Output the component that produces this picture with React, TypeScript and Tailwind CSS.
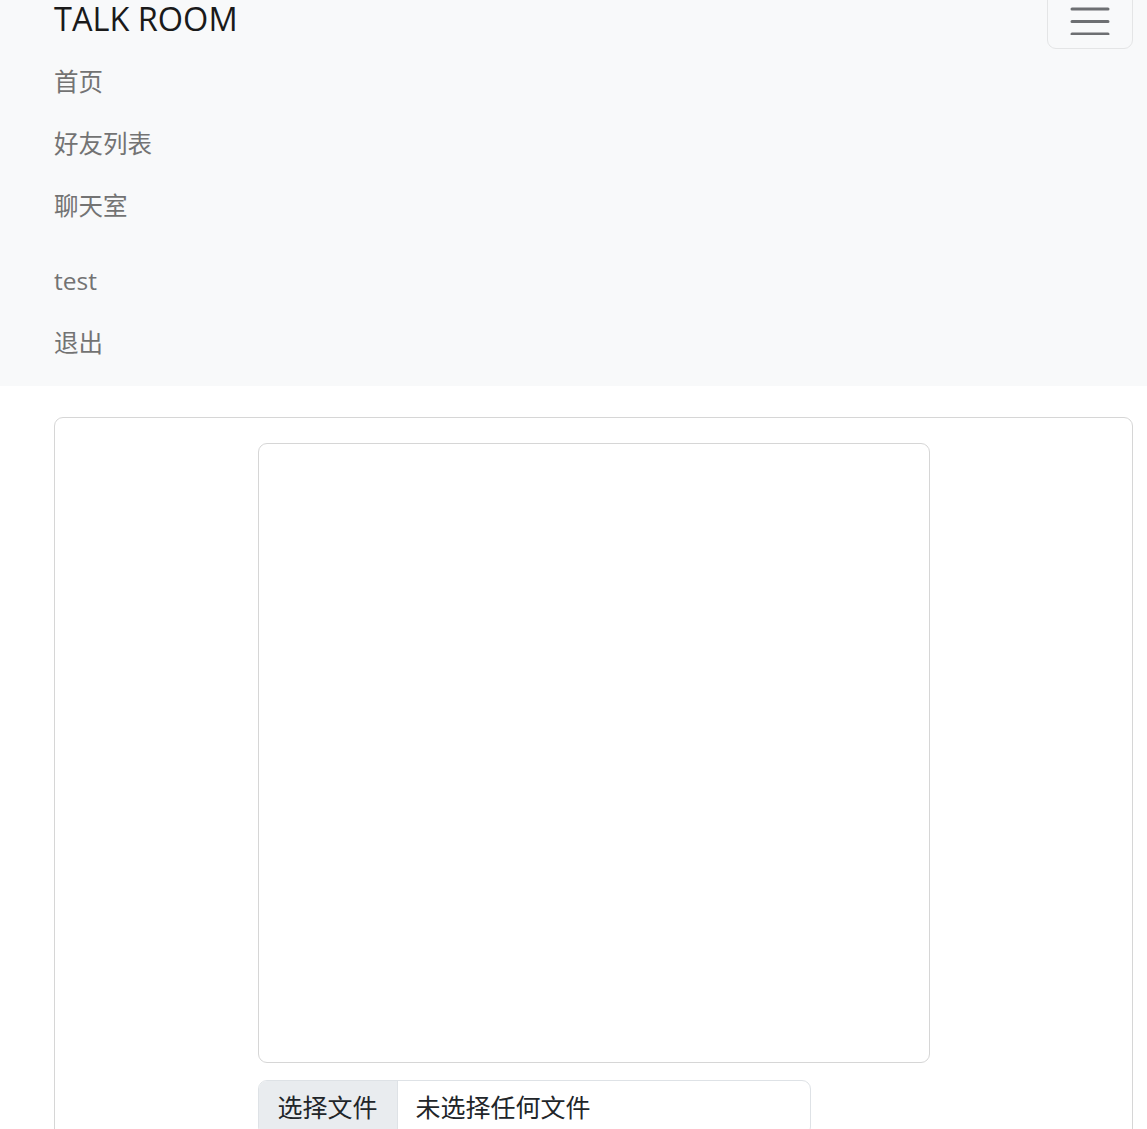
import React from "react";

const navLinks = [
  { label: "首页", id: "home" },
  { label: "好友列表", id: "friends" },
  { label: "聊天室", id: "chat" },
];

const userLinks = [
  { label: "test", id: "user" },
  { label: "退出", id: "logout" },
];

const fontStack = "font-['Segoe_UI','Open_Sans','Noto_Sans_CJK_SC',sans-serif]";

export default function App() {
  return (
    <div className={`h-[1129px] w-full overflow-hidden bg-white ${fontStack}`}>
      <header className="bg-[#f8f9fa] pb-[12px] pl-[54px] pr-[14px]">
        <div className="-mt-[10px] flex items-start justify-between">
          <a className="mt-[6px] block text-[32.5px] leading-[45px] text-[#1a1a1a]">TALK ROOM</a>
          <button
            className="flex h-[59px] w-[86px] items-center justify-center rounded-[9px] border border-[#e4e5e6]"
            aria-label="Toggle navigation"
          >
            <svg width="40" height="30" viewBox="0 0 40 30" aria-hidden="true">
              <path
                d="M2 4h36M2 16.5h36M2 29h36"
                stroke="#6d6f72"
                strokeWidth="3"
                strokeLinecap="round"
              />
            </svg>
          </button>
        </div>
        <nav className="mt-[2px] flex flex-col">
          {navLinks.map((l) => (
            <a key={l.id} className="flex h-[62px] items-center text-[24.5px] text-[#737373]">
              {l.label}
            </a>
          ))}
        </nav>
        <nav className="mt-[13px] flex flex-col">
          {userLinks.map((l) => (
            <a key={l.id} className="flex h-[62px] items-center text-[24.5px] text-[#737373]">
              {l.label}
            </a>
          ))}
        </nav>
      </header>

      <main className="pl-[54px] pr-[14px] pt-[31px]">
        <div className="flex h-[800px] flex-col items-center rounded-[9px] border border-[#d6d6d6] pt-[25px]">
          <div className="w-[672px]">
            <div className="h-[620px] w-full rounded-[9px] border border-[#d6d6d6]" />
            <label className="mt-[17px] flex h-[56px] w-[553px] overflow-hidden rounded-[9px] border border-[#dee2e6] text-[25px] text-[#212529]">
              <span className="flex w-[139px] items-center border-r border-[#dee2e6] bg-[#e9ecef] pl-[19px]">
                选择文件
              </span>
              <span className="flex items-center pl-[18px]">未选择任何文件</span>
            </label>
          </div>
        </div>
      </main>
    </div>
  );
}
